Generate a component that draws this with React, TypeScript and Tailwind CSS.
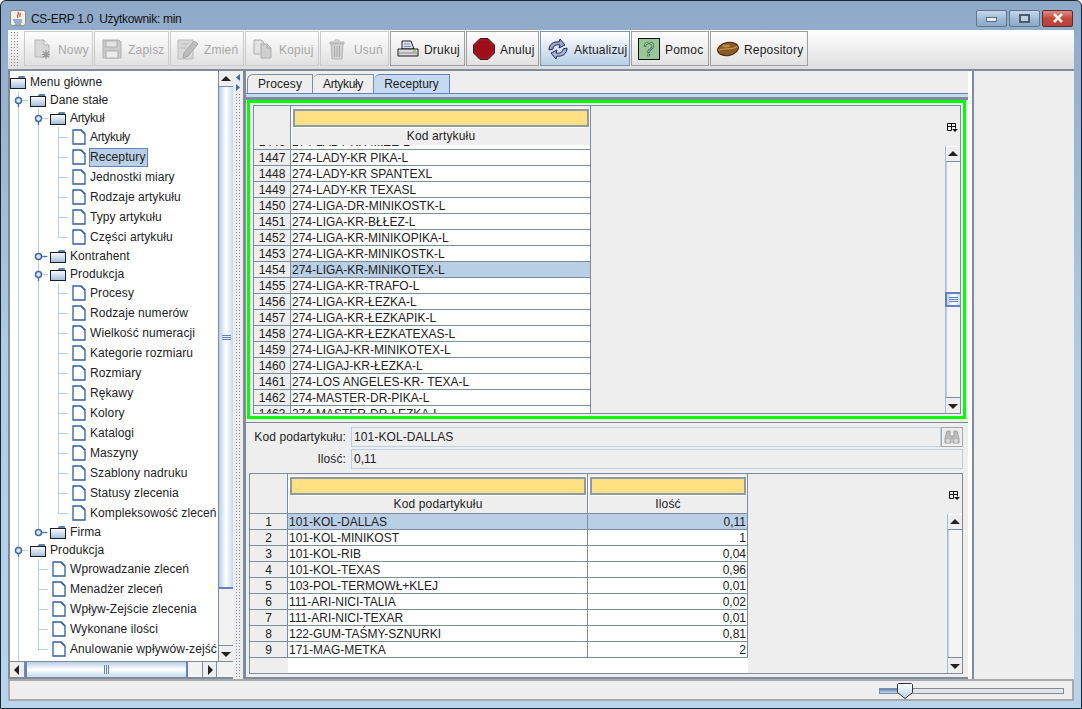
import type { ReactNode } from 'react';

const LINE = '#b8cfe5';

function Folder() {
  return (
    <svg width="16" height="14" viewBox="0 0 16 14" className="shrink-0">
      <defs>
        <linearGradient id="folderFill" x1="0" y1="0" x2="0" y2="1">
          <stop offset="0" stopColor="#ffffff" />
          <stop offset="1" stopColor="#9fbbdb" />
        </linearGradient>
      </defs>
      <path d="M9 1.5h5.5v2H8z" fill="#5f7fae" stroke="#5f7fae" />
      <rect x="0.5" y="3.5" width="15" height="10" fill="url(#folderFill)" stroke="#1d1d1d" />
    </svg>
  );
}

function Leaf() {
  return (
    <svg width="14" height="16" viewBox="0 0 14 16" className="shrink-0 ml-[2px]">
      <path d="M1 1h8l4 4v10H1z" fill="#fff" stroke="#2f5f9f" strokeWidth="1.3" />
      <path d="M9 1l4 4" stroke="#2f5f9f" strokeWidth="1.6" />
    </svg>
  );
}

type TreeNode = {
  label: string;
  depth: number;
  leaf?: boolean;
  open?: boolean;
  through?: number[];
  last?: boolean;
  selected?: boolean;
};

function TreeRow({ node }: { node: TreeNode }) {
  const h = node.leaf ? 20 : 18;
  const w = node.depth * 20;
  const lx = 8 + 20 * (node.depth - 1);
  const mid = h / 2;
  const tight = node.label.startsWith('Artyku');
  return (
    <div className={`flex items-center shrink-0 ${node.leaf ? 'h-[20px]' : 'h-[18px]'}`}>
      {w > 0 && (
        <svg width={w} height={h} className="shrink-0">
          {(node.through ?? []).map((l) => (
            <line key={l} x1={8.5 + 20 * l} y1="0" x2={8.5 + 20 * l} y2={h} stroke={LINE} />
          ))}
          <line x1={lx + 0.5} y1="0" x2={lx + 0.5} y2={node.last ? mid : h} stroke={LINE} />
          <line x1={lx} y1={mid + 0.5} x2={lx + 10} y2={mid + 0.5} stroke={LINE} />
          {!node.leaf && (
            <>
              {node.open ? (
                <line x1={lx + 0.5} y1={mid} x2={lx + 0.5} y2={mid + 7} stroke="#4a72aa" strokeWidth="1.4" />
              ) : (
                <line x1={lx} y1={mid + 0.5} x2={lx + 9} y2={mid + 0.5} stroke="#4a72aa" strokeWidth="1.4" />
              )}
              <circle cx={lx + 0.5} cy={mid + 0.5} r="3" fill="#dbe7f5" stroke="#3e6aa6" strokeWidth="1.5" />
            </>
          )}
        </svg>
      )}
      <div className="w-[20px] shrink-0 flex items-center">{node.leaf ? <Leaf /> : <Folder />}</div>
      {node.label && (
        <span
          className={`whitespace-nowrap leading-[15px] border ${tight ? 'tracking-[-0.35px]' : 'tracking-[0.09px]'} ${
            node.selected ? 'bg-[#b8cfe5] border-[#6382bf] py-[1px] pr-[1px] -ml-[1px]' : 'border-transparent -ml-[1px]'
          }`}
        >
          {node.label}
        </span>
      )}
    </div>
  );
}

const leavesA = ['Artykuły', 'Receptury', 'Jednostki miary', 'Rodzaje artykułu', 'Typy artykułu', 'Części artykułu'];
const leavesB = [
  'Procesy',
  'Rodzaje numerów',
  'Wielkość numeracji',
  'Kategorie rozmiaru',
  'Rozmiary',
  'Rękawy',
  'Kolory',
  'Katalogi',
  'Maszyny',
  'Szablony nadruku',
  'Statusy zlecenia',
  'Kompleksowość zleceń',
];
const leavesC = ['Wprowadzanie zleceń', 'Menadżer zleceń', 'Wpływ-Zejście zlecenia', 'Wykonane ilości', 'Anulowanie wpływów-zejść'];

const tree: TreeNode[] = [
  { label: 'Menu główne', depth: 0 },
  { label: 'Dane stałe', depth: 1, open: true },
  { label: 'Artykuł', depth: 2, open: true, through: [0] },
  ...leavesA.map((label, i) => ({
    label,
    depth: 3,
    leaf: true,
    through: [0, 1],
    last: i === leavesA.length - 1,
    selected: label === 'Receptury',
  })),
  { label: 'Kontrahent', depth: 2, through: [0] },
  { label: 'Produkcja', depth: 2, open: true, through: [0] },
  ...leavesB.map((label, i) => ({ label, depth: 3, leaf: true, through: [0, 1], last: i === leavesB.length - 1 })),
  { label: 'Firma', depth: 2, through: [0], last: true },
  { label: 'Produkcja', depth: 1, open: true, last: false },
  ...leavesC.map((label, i) => ({ label, depth: 2, leaf: true, through: [0], last: i === leavesC.length - 1 })),
  { label: '', depth: 1, last: true },
];

function Arrow({ dir }: { dir: 'up' | 'down' | 'left' | 'right' }) {
  const pts = {
    up: '1,8 6,3 11,8',
    down: '1,4 11,4 6,9',
    left: '8,1 8,11 3,6',
    right: '4,1 4,11 9,6',
  }[dir];
  return (
    <svg width="12" height="12" viewBox="0 0 12 12">
      <polygon points={pts} fill="#222" />
    </svg>
  );
}

function ScrollBtn({ dir, className }: { dir: 'up' | 'down' | 'left' | 'right'; className: string }) {
  return (
    <div className={`flex items-center justify-center shrink-0 bg-[#eeeeee] border-[#7d8c9f] ${className}`}>
      <Arrow dir={dir} />
    </div>
  );
}

function VScroll({ thumbTop, thumbHeight }: { thumbTop?: number; thumbHeight?: number }) {
  return (
    <div className="w-[15px] flex-1 flex flex-col bg-[#f4f4f4] border-l border-[#a9bdd6]">
      <ScrollBtn dir="up" className="h-[16px] border-b border-t border-t-white" />
      <div className="flex-1 relative border-l border-[#b8cfe5]">
        {thumbHeight !== undefined && (
          <div
            className="absolute -left-[2px] right-0 flex flex-col items-center justify-center gap-[1px] border-y-2 border-l-2 border-[#6382bf] bg-gradient-to-r from-[#b8cfe5] via-white to-[#c5daef]"
            style={{ top: thumbTop, height: thumbHeight }}
          >
            <div className="w-[9px] h-[1px] bg-[#6382bf]" />
            <div className="w-[9px] h-[1px] bg-[#6382bf]" />
            <div className="w-[9px] h-[1px] bg-[#6382bf]" />
          </div>
        )}
      </div>
      <ScrollBtn dir="down" className="h-[16px] border-t" />
    </div>
  );
}

function ColumnMenu() {
  return (
    <svg width="11" height="10" viewBox="0 0 11 10">
      <path d="M0.5 7.5v-7h8v5M0.5 3.5h8M4.5 0.5v7M0.5 7.5h4" fill="none" stroke="#111" />
      <polygon points="5,6 11,6 8,9" fill="#111" />
    </svg>
  );
}

type Column = { label: string; w: string; right?: boolean };

function HeaderCell({ col }: { col: Column }) {
  return (
    <div className={`${col.w} shrink-0 h-full flex flex-col border-r border-[#7d8c9f] border-l border-l-white`}>
      <div className="mx-[1px] mt-[3px] h-[19px] bg-[#ffe082] border-2 border-[#8d9aa8] outline outline-white" />
      <div className="flex-1 flex items-center justify-center tracking-[0.15px]">{col.label}</div>
    </div>
  );
}

function DataRow({
  num,
  cells,
  cols,
  headW,
  active,
}: {
  num: number;
  cells: string[];
  cols: Column[];
  headW: string;
  active?: boolean;
}) {
  return (
    <div className="flex h-[16px] shrink-0">
      <div className={`${headW} shrink-0 text-center bg-[#eeeeee] border-r border-b border-[#7d8c9f] leading-[17px] overflow-hidden`}>{num}</div>
      {cells.map((c, i) => (
        <div
          key={i}
          className={`${cols[i].w} shrink-0 border-r border-b border-[#7d8c9f] leading-[17px] px-[1px] whitespace-nowrap overflow-hidden ${
            active ? 'bg-[#b8cfe5]' : 'bg-white'
          } ${cols[i].right ? 'text-right' : ''}`}
        >
          {c}
        </div>
      ))}
    </div>
  );
}

const topCols: Column[] = [{ label: 'Kod artykułu', w: 'w-[300px]' }];
const topRows: [number, string][] = [
  [1446, '274-LADY-KR MIZE-L'],
  [1447, '274-LADY-KR PIKA-L'],
  [1448, '274-LADY-KR SPANTEXL'],
  [1449, '274-LADY-KR TEXASL'],
  [1450, '274-LIGA-DR-MINIKOSTK-L'],
  [1451, '274-LIGA-KR-BŁŁEZ-L'],
  [1452, '274-LIGA-KR-MINIKOPIKA-L'],
  [1453, '274-LIGA-KR-MINIKOSTK-L'],
  [1454, '274-LIGA-KR-MINIKOTEX-L'],
  [1455, '274-LIGA-KR-TRAFO-L'],
  [1456, '274-LIGA-KR-ŁEZKA-L'],
  [1457, '274-LIGA-KR-ŁEZKAPIK-L'],
  [1458, '274-LIGA-KR-ŁEZKATEXAS-L'],
  [1459, '274-LIGAJ-KR-MINIKOTEX-L'],
  [1460, '274-LIGAJ-KR-ŁEZKA-L'],
  [1461, '274-LOS ANGELES-KR- TEXA-L'],
  [1462, '274-MASTER-DR-PIKA-L'],
  [1463, '274-MASTER-DR-ŁEZKA-L'],
];

const bottomCols: Column[] = [
  { label: 'Kod podartykułu', w: 'w-[300px]' },
  { label: 'Ilość', w: 'w-[160px]', right: true },
];
const bottomRows: [number, string, string][] = [
  [1, '101-KOL-DALLAS', '0,11'],
  [2, '101-KOL-MINIKOST', '1'],
  [3, '101-KOL-RIB', '0,04'],
  [4, '101-KOL-TEXAS', '0,96'],
  [5, '103-POL-TERMOWŁ+KLEJ', '0,01'],
  [6, '111-ARI-NICI-TALIA', '0,02'],
  [7, '111-ARI-NICI-TEXAR', '0,01'],
  [8, '122-GUM-TAŚMY-SZNURKI', '0,81'],
  [9, '171-MAG-METKA', '2'],
];

function ToolButton({
  w,
  label,
  icon,
  disabled,
  active,
}: {
  w: string;
  label: string;
  icon: ReactNode;
  disabled?: boolean;
  active?: boolean;
}) {
  return (
    <div
      className={`${w} h-[35px] shrink-0 flex items-center pl-[6px] gap-[5px] border tracking-[0.2px] ${
        active
          ? 'bg-gradient-to-b from-white to-[#b8cfe5] border-[#7d96b8] text-[#222]'
          : disabled
            ? 'border-[#cbcbcb] text-[#a8a8a8]'
            : 'border-[#a0a0a0] text-[#222]'
      }`}
    >
      <div className="w-[22px] h-[22px] shrink-0">{icon}</div>
      <span className="whitespace-nowrap pt-[2px]">{label}</span>
    </div>
  );
}

const Icon = ({ children }: { children: ReactNode }) => (
  <svg width="22" height="22" viewBox="0 0 22 22">
    {children}
  </svg>
);

const IconNowy = () => (
  <Icon>
    <path d="M4 2h9l5 5v12H4z" fill="#d8d8d8" stroke="#b5b5b5" />
    <path d="M13 2v5h5" fill="#eee" stroke="#b5b5b5" />
    <path d="M15 12v9M11 16.500h8M12 13.500l6 6M18 13.500l-6 6" stroke="#9a9a9a" strokeWidth="1.2" />
  </Icon>
);
const IconZapisz = () => (
  <Icon>
    <path d="M2 2h16l2 2v16H2z" fill="#c9c9c9" stroke="#b0b0b0" />
    <rect x="5" y="3" width="11" height="6" fill="#e4e4e4" stroke="#b0b0b0" />
    <rect x="5" y="13" width="12" height="7" fill="#ececec" stroke="#b0b0b0" />
  </Icon>
);
const IconZmien = () => (
  <Icon>
    <path d="M1 2h15v19H1z" fill="#d8d8d8" stroke="#bbb" />
    <path d="M6 20l1-5L17 3l4 3-10 12z" fill="#bdbdbd" stroke="#a5a5a5" />
    <path d="M3 6h8M3 10h6" stroke="#bbb" />
  </Icon>
);
const IconKopiuj = () => (
  <Icon>
    <path d="M2 2h7l3 3v11H2z" fill="#e2e2e2" stroke="#adadad" />
    <path d="M9 6h6l4 4v10H9z" fill="#cfcfcf" stroke="#adadad" />
    <path d="M15 6v4h4" fill="none" stroke="#adadad" />
  </Icon>
);
const IconUsun = () => (
  <Icon>
    <path d="M3 4h14v2H3z" fill="#cfcfcf" stroke="#b5b5b5" />
    <path d="M8 3.500V2h4v1.500" fill="none" stroke="#b5b5b5" />
    <path d="M4 6h12l-1 15H5z" fill="#d2d2d2" stroke="#b5b5b5" />
    <path d="M7.500 8v11M10 8v11M12.500 8v11" stroke="#a8a8a8" />
  </Icon>
);
const IconDrukuj = () => (
  <Icon>
    <path d="M5 11V3h9l3 8z" fill="#dfe3f5" stroke="#1c1c1c" />
    <path d="M7 6h6M7 8.500h7" stroke="#8088b8" />
    <path d="M1 11h20v7H1z" fill="#d9d9d9" stroke="#1c1c1c" />
    <path d="M2 15h18" stroke="#8a8a8a" />
    <rect x="16" y="12.500" width="3" height="1.500" fill="#7fd13b" />
  </Icon>
);
const IconAnuluj = () => (
  <Icon>
    <polygon points="7,0.500 15,0.500 21.500,7 21.500,15 15,21.500 7,21.500 0.500,15 0.500,7" fill="#b2101f" stroke="#222" />
    <polygon points="7.500,2.500 14.500,2.500 19.500,7.500 19.500,14.500 14.500,19.500 7.500,19.500 2.500,14.500 2.500,7.500" fill="#a00d1a" />
  </Icon>
);
const IconAktualizuj = () => (
  <Icon>
    <path d="M2 12C2 6 7 3 12 4l1-3 5 6-6 3 1-3C9 6 6 8 6 11z" fill="#9aa3d8" stroke="#23284d" />
    <path d="M20 10c0 6-5 9-10 8l-1 3-5-6 6-3-1 3c4 1 7-1 7-4z" fill="#a9b1e2" stroke="#23284d" />
  </Icon>
);
const IconPomoc = () => (
  <Icon>
    <rect x="0.500" y="0.500" width="21" height="21" fill="#9ac69c" stroke="#111" />
    <text x="11" y="18" textAnchor="middle" fontSize="20" fontFamily="'Liberation Sans', sans-serif" fill="#b9dcb9" stroke="#2f5a33" strokeWidth="0.7">
      ?
    </text>
  </Icon>
);
const IconRepository = () => (
  <Icon>
    <ellipse cx="11" cy="11" rx="10.500" ry="6.500" fill="#8a5a24" stroke="#3d2508" transform="rotate(-10 11 11)" />
    <path d="M1.500 12.500C6 9 14 13 20.500 8.500" fill="none" stroke="#c79a54" strokeWidth="1.4" />
    <ellipse cx="9" cy="8" rx="4" ry="1.400" fill="#b98a48" />
  </Icon>
);

function Binoculars() {
  return (
    <svg width="16" height="16" viewBox="0 0 16 16">
      <path d="M3 2h3v5h4V2h3l2 8v4H9V9H7v5H1v-4z" fill="#bdbdbd" stroke="#a0a0a0" />
      <circle cx="4" cy="12" r="2" fill="#dadada" />
      <circle cx="12" cy="12" r="2" fill="#dadada" />
    </svg>
  );
}

function WindowButton({ kind }: { kind: 'min' | 'max' | 'close' }) {
  const base = 'h-[17px] rounded-[2px] border flex items-center justify-center';
  if (kind === 'close') {
    return (
      <div className={`${base} w-[31px] border-[#5c2b2b] bg-gradient-to-b from-[#dc8d82] via-[#c4463a] to-[#b4443c]`}>
        <svg width="12" height="10" viewBox="0 0 12 10">
          <path d="M2 1l8 8M10 1l-8 8" stroke="#f4efe9" strokeWidth="2.6" />
        </svg>
      </div>
    );
  }
  return (
    <div className={`${base} w-[31px] border-[#5f7691] bg-gradient-to-b from-[#c6d8ea] via-[#a3bcd6] to-[#8ba8c8]`}>
      {kind === 'min' ? (
        <div className="w-[11px] h-[5px] mt-[3px] bg-[#e9eef4] border border-[#5b6d82]" />
      ) : (
        <div className="w-[11px] h-[9px] border-2 border-[#4a5c72] bg-[#bcd0e6]" />
      )}
    </div>
  );
}

const dotted = 'bg-[radial-gradient(circle,#7e8c9c_0.8px,transparent_0.9px)] bg-[length:3px_3px]';

export default function App() {
  return (
    <div className="w-[1082px] h-[709px] overflow-hidden flex flex-col border border-[#1c2530] rounded-t-[6px] bg-gradient-to-b from-[#8fa9c8] via-[#b0cbe4] to-[#b9d5ee] text-[12px] text-[#222] font-['Liberation_Sans',sans-serif]">
      {/* title bar */}
      <div className="h-[29px] shrink-0 flex items-center pl-[9px] pr-[8px] pt-[4px]">
        <svg width="16" height="16" viewBox="0 0 16 16" className="shrink-0">
          <rect x="0.500" y="0.500" width="15" height="15" rx="2" fill="#f1f1ea" stroke="#8b8b8b" />
          <path d="M8 2c2 2-2 3 0 6M10 3c1 1-1 2 0 4" fill="none" stroke="#d9421e" strokeWidth="1.2" />
          <path d="M3 10h9M4 12h8M5 14h6" stroke="#3d6cb0" />
        </svg>
        <span className="ml-[5px] text-[#111] mt-[2px] whitespace-pre tracking-[-0.3px]">CS-ERP 1.0&nbsp; Użytkownik: min</span>
        <div className="ml-auto flex gap-[2px] mt-[1px]">
          <WindowButton kind="min" />
          <WindowButton kind="max" />
          <WindowButton kind="close" />
        </div>
      </div>

      <div className="mx-[7px] w-[1066px] flex-1 flex flex-col bg-[#eeeeee]">
        {/* toolbar */}
        <div className="h-[39px] shrink-0 flex items-start pt-[1px] pl-[2px] gap-[1px] bg-gradient-to-b from-white to-[#dedede]">
          <div className={`w-[10px] h-[35px] mr-[3px] ${dotted}`} />
          <ToolButton w="w-[69px]" label="Nowy" disabled icon={<IconNowy />} />
          <ToolButton w="w-[75px]" label="Zapisz" disabled icon={<IconZapisz />} />
          <ToolButton w="w-[74px]" label="Zmień" disabled icon={<IconZmien />} />
          <ToolButton w="w-[74px]" label="Kopiuj" disabled icon={<IconKopiuj />} />
          <ToolButton w="w-[69px]" label="Usuń" disabled icon={<IconUsun />} />
          <ToolButton w="w-[75px]" label="Drukuj" icon={<IconDrukuj />} />
          <ToolButton w="w-[73px]" label="Anuluj" icon={<IconAnuluj />} />
          <ToolButton w="w-[90px]" label="Aktualizuj" active icon={<IconAktualizuj />} />
          <ToolButton w="w-[78px]" label="Pomoc" icon={<IconPomoc />} />
          <ToolButton w="w-[98px]" label="Repository" icon={<IconRepository />} />
        </div>
        <div className="h-[2px] shrink-0 bg-[#7e8c9c]" />

        {/* body */}
        <div className="h-[608px] shrink-0 flex">
          {/* left tree pane */}
          <div className="w-[225px] shrink-0 flex flex-col border-l-2 border-b-2 border-[#7e8c9c]">
            <div className="h-[590px] shrink-0 flex">
              <div className="w-[208px] shrink-0 bg-white pt-[2px] flex flex-col overflow-hidden">
                {tree.map((n, i) => (
                  <TreeRow key={i} node={n} />
                ))}
              </div>
              <div className="w-[15px] shrink-0 flex flex-col bg-[#f2f2f2] border-l border-[#7d8c9f]">
                <ScrollBtn dir="up" className="h-[16px] border-b" />
                <div className="h-[502px] shrink-0 flex flex-col items-center justify-center gap-[1px] border-b-2 border-[#6382bf] bg-gradient-to-r from-[#b8cfe5] via-white to-[#c5daef]">
                  <div className="w-[9px] h-[1px] bg-[#6382bf]" />
                  <div className="w-[9px] h-[1px] bg-[#6382bf]" />
                  <div className="w-[9px] h-[1px] bg-[#6382bf]" />
                </div>
                <div className="flex-1" />
                <ScrollBtn dir="down" className="h-[16px] border-t" />
              </div>
            </div>
            <div className="flex-1 flex border-t border-[#7d8c9f] bg-[#f2f2f2]">
              <ScrollBtn dir="left" className="w-[15px] border-r" />
              <div className="w-[163px] shrink-0 flex items-center justify-center gap-[1px] border-x-2 border-[#6382bf] bg-gradient-to-b from-[#b8cfe5] via-white to-[#c5daef]">
                <div className="w-[1px] h-[9px] bg-[#6382bf]" />
                <div className="w-[1px] h-[9px] bg-[#6382bf]" />
                <div className="w-[1px] h-[9px] bg-[#6382bf]" />
              </div>
              <div className="w-[14px] shrink-0" />
              <ScrollBtn dir="right" className="w-[15px] border-x" />
            </div>
          </div>

          {/* splitter */}
          <div className="w-[10px] shrink-0 flex flex-col items-center pt-[2px]">
            <svg width="8" height="20" viewBox="0 0 8 20" className="shrink-0">
              <polygon points="6,1 6,8 2,4.500" fill="#3e6aa6" />
              <polygon points="2,11 2,18 6,14.500" fill="#3e6aa6" />
            </svg>
            <div className={`flex-1 w-[6px] ${dotted}`} />
          </div>

          {/* main pane */}
          <div className="w-[3px] shrink-0 bg-[#7e8c9c]" />
          <div className="w-[722px] shrink-0 flex flex-col border-b-2 border-[#7e8c9c]">
            <div className="h-[22px] shrink-0 flex items-end pl-[1px]">
              <div className="w-[66px] h-[19px] flex items-center justify-center border border-b-0 border-[#7d8c9f] rounded-tl-[6px] tracking-[0.1px]">Procesy</div>
              <div className="w-[61px] h-[19px] flex items-center justify-center border border-b-0 border-l-0 border-[#7d8c9f] rounded-tl-[6px] tracking-[-0.35px]">Artykuły</div>
              <div className="w-[76px] h-[19px] flex items-center justify-center border border-b-0 border-l-0 border-[#6382bf] bg-[#c5daef] rounded-tl-[6px]">Receptury</div>
            </div>
            <div className="h-[4px] shrink-0 border-t border-[#6382bf] bg-[#c5daef]" />
            <div className="h-[3px] shrink-0 bg-[#7e8c9c]" />

            {/* green selection around upper table */}
            <div className="ml-[1px] w-[719px] h-[319px] shrink-0 border-[3px] border-[#00ff00] pl-[3px] pt-[2px] pr-[2px] pb-[2px]">
              <div className="h-full flex border border-[#7d8c9f]">
                <div className="w-[337px] shrink-0 flex flex-col overflow-hidden">
                  <div className="h-[39px] shrink-0 flex relative z-10 bg-[#eeeeee]">
                    <div className="w-[37px] shrink-0 border-r border-[#7d8c9f]" />
                    <HeaderCell col={topCols[0]} />
                  </div>
                  <div className="-mt-[11px]">
                    {topRows.map(([n, t]) => (
                      <DataRow key={n} num={n} cells={[t]} cols={topCols} headW="w-[37px]" active={n === 1454} />
                    ))}
                  </div>
                </div>
                <div className="flex-1" />
                <div className="w-[15px] shrink-0 flex flex-col">
                  <div className="h-[40px] shrink-0 flex items-center justify-center pt-[4px]">
                    <ColumnMenu />
                  </div>
                  <VScroll thumbTop={130} thumbHeight={15} />
                </div>
              </div>
            </div>

            <div className="h-[3px] shrink-0" />
            <div className="h-[1px] shrink-0 bg-[#7e8c9c]" />

            {/* form */}
            <div className="h-[50px] shrink-0 flex flex-col pt-[4px]">
              <div className="flex h-[20px] items-center">
                <div className="w-[100px] text-right tracking-[0.1px] -mt-[1px]">Kod podartykułu:</div>
                <div className="ml-[5px] w-[590px] h-full flex items-center pl-[2px] border border-[#b8cfe5] tracking-[0.1px]">101-KOL-DALLAS</div>
                <div className="w-[22px] h-full flex items-center justify-center border border-[#a9a9a9]">
                  <Binoculars />
                </div>
              </div>
              <div className="flex h-[20px] items-center mt-[2px]">
                <div className="w-[100px] text-right tracking-[0.1px]">Ilość:</div>
                <div className="ml-[5px] w-[612px] h-full flex items-center pl-[2px] border border-[#b8cfe5]">0,11</div>
              </div>
            </div>

            {/* lower table */}
            <div className="ml-[3px] w-[714px] h-[201px] shrink-0 flex border border-[#7d8c9f]">
              <div className="w-[498px] shrink-0 flex flex-col">
                <div className="h-[40px] shrink-0 flex border-b border-[#7d8c9f]">
                  <div className="w-[38px] shrink-0 border-r border-[#7d8c9f]" />
                  <HeaderCell col={bottomCols[0]} />
                  <HeaderCell col={bottomCols[1]} />
                </div>
                {bottomRows.map(([n, a, b]) => (
                  <DataRow key={n} num={n} cells={[a, b]} cols={bottomCols} headW="w-[38px]" active={n === 1} />
                ))}
                <div className="flex-1 flex">
                  <div className="w-[38px] shrink-0" />
                  <div className="flex-1 bg-white" />
                </div>
              </div>
              <div className="flex-1" />
              <div className="w-[15px] shrink-0 flex flex-col">
                <div className="h-[40px] shrink-0 flex items-center justify-center pt-[4px]">
                  <ColumnMenu />
                </div>
                <VScroll />
              </div>
            </div>
          </div>

          {/* empty right panel */}
          <div className="w-[4px] shrink-0 bg-white" />
          <div className="flex-1 border-l-2 border-[#7e8c9c]" />
        </div>

        {/* status bar */}
        <div className="flex-1 flex items-center justify-end border-2 border-[#a9a9a9] pr-[8px]">
          <div className="w-[185px] h-[6px] border border-[#7e8c9c] bg-[#e4e4e4] relative mt-[1px]">
            <div className="w-[20px] h-full bg-gradient-to-b from-[#6382bf] to-[#c5daef]" />
            <svg width="16" height="16" viewBox="0 0 16 16" className="absolute left-[17px] -top-[6px]">
              <defs>
                <linearGradient id="thumbFill" x1="0" y1="0" x2="0" y2="1">
                  <stop offset="0" stopColor="#ffffff" />
                  <stop offset="1" stopColor="#b8cfe5" />
                </linearGradient>
              </defs>
              <path d="M0.500 1.500l1-1h13l1 1v8l-7.500 6-7.500-6z" fill="url(#thumbFill)" stroke="#333" />
            </svg>
          </div>
        </div>
      </div>
      <div className="h-[7px] shrink-0" />
    </div>
  );
}
